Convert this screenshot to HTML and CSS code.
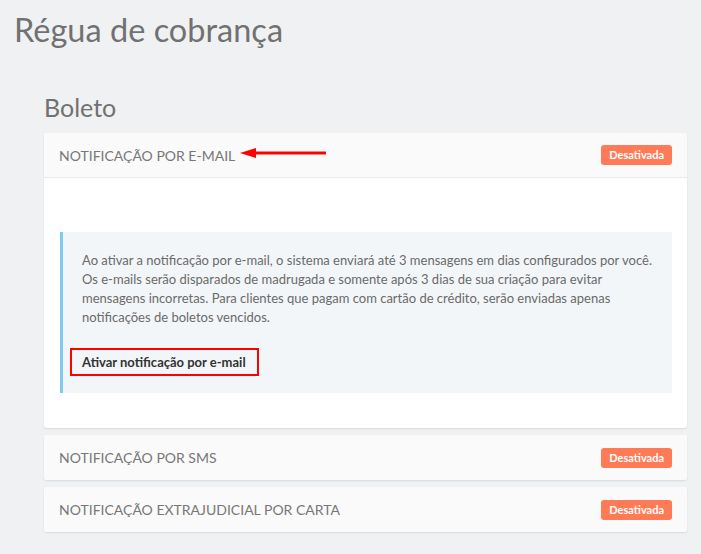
FILE: index.html
```html
<!DOCTYPE html>
<html lang="pt-BR">
<head>
<meta charset="utf-8">
<title>Régua de cobrança</title>
<link rel="stylesheet" href="styles.css">
</head>
<body>
<h1 class="page-title">Régua de cobrança</h1>
<section class="section">
  <h2 class="section-title">Boleto</h2>

  <div class="card">
    <div class="card-header card-header--open">
      <span class="card-title">NOTIFICAÇÃO POR E-MAIL</span>
      <svg class="annot-arrow" width="90" height="12" viewBox="0 0 90 12">
        <polygon points="0,6 16,1 16,11" fill="#f00"/>
        <rect x="12" y="4.5" width="74" height="3" fill="#f00"/>
      </svg>
      <span class="badge">Desativada</span>
    </div>
    <div class="card-body">
      <div class="info">
        <p class="info-text">Ao ativar a notificação por e-mail, o sistema enviará até 3 mensagens em dias configurados por você.<br>Os e-mails serão disparados de madrugada e somente após 3 dias de sua criação para evitar<br>mensagens incorretas. Para clientes que pagam com cartão de crédito, serão enviadas apenas<br>notificações de boletos vencidos.</p>
        <button class="btn-link" type="button">Ativar notificação por e-mail</button>
      </div>
    </div>
  </div>

  <div class="card">
    <div class="card-header">
      <span class="card-title">NOTIFICAÇÃO POR SMS</span>
      <span class="badge">Desativada</span>
    </div>
  </div>

  <div class="card">
    <div class="card-header">
      <span class="card-title">NOTIFICAÇÃO EXTRAJUDICIAL POR CARTA</span>
      <span class="badge">Desativada</span>
    </div>
  </div>
</section>
</body>
</html>
```

FILE: styles.css
```css
* { box-sizing: border-box; }

body {
  margin: 0;
  background: #f0f1f3;
  font-family: Lato, "Open Sans", "Liberation Sans", sans-serif;
  color: #666;
}

.page-title {
  margin: 11px 0 0 14px;
  font-size: 32.5px;
  line-height: 38px;
  font-weight: 400;
  color: #717171;
}

.section {
  padding: 0 14px 0 44px;
}

.section-title {
  margin: 43px 0 11px 0;
  font-size: 25px;
  line-height: 30px;
  font-weight: 400;
  color: #717171;
}

.card {
  background: #fff;
  border-radius: 3px;
  box-shadow: 0 1px 2px rgba(0, 0, 0, 0.1);
  margin-bottom: 7px;
  overflow: hidden;
}

.card-header {
  position: relative;
  display: flex;
  align-items: center;
  justify-content: space-between;
  height: 45px;
  padding: 0 15px;
  background: #fafafa;
}

.card-header--open {
  border-bottom: 1px solid #ebebeb;
}

.card-title {
  font-size: 14px;
  color: #777;
}

.annot-arrow {
  position: absolute;
  left: 196px;
  top: 14px;
}

.badge {
  display: inline-block;
  height: 20px;
  line-height: 20px;
  padding: 0 8px;
  border-radius: 3px;
  background: #ff7a57;
  color: #fff;
  font-size: 11px;
  font-weight: 700;
}

.card-body {
  padding: 54px 15px 35px 16px;
}

.info {
  background: #f3f6f9;
  border-left: 3px solid #7ecdf0;
  padding: 19px 10px 17px 19px;
}

.info-text {
  margin: 0 0 21px 0;
  font-size: 13px;
  line-height: 19px;
  color: #6a6a6a;
  white-space: nowrap;
}

.btn-link {
  display: block;
  margin-left: -12px;
  height: 28px;
  padding: 0 11px 0 10px;
  border: 2px solid #f00;
  background: transparent;
  font-family: inherit;
  font-size: 13px;
  font-weight: 700;
  color: #333;
  cursor: pointer;
}
```
